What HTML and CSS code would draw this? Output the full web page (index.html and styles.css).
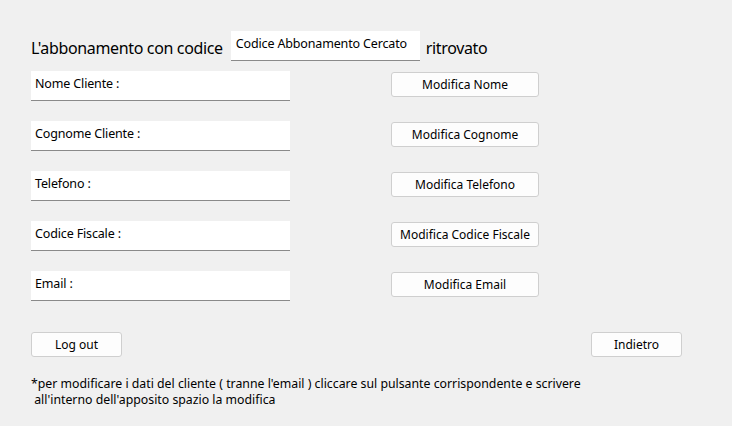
FILE: index.html
```html
<!DOCTYPE html>
<html lang="it">
<head>
<meta charset="utf-8">
<title>Abbonamento</title>
<link rel="stylesheet" href="styles.css">
</head>
<body>
<div class="page">
  <div class="title-row">
    <span class="title">L'abbonamento con codice</span>
    <div class="code-field">Codice Abbonamento Cercato</div>
    <span class="title">ritrovato</span>
  </div>
  <div class="rows">
    <div class="row"><div class="field">Nome Cliente :</div><button class="btn btn-mod">Modifica Nome</button></div>
    <div class="row"><div class="field">Cognome Cliente :</div><button class="btn btn-mod">Modifica Cognome</button></div>
    <div class="row"><div class="field">Telefono :</div><button class="btn btn-mod">Modifica Telefono</button></div>
    <div class="row"><div class="field">Codice Fiscale :</div><button class="btn btn-mod">Modifica Codice Fiscale</button></div>
    <div class="row"><div class="field">Email :</div><button class="btn btn-mod">Modifica Email</button></div>
  </div>
  <div class="actions">
    <button class="btn btn-small">Log out</button>
    <button class="btn btn-small">Indietro</button>
  </div>
  <p class="note">*per modificare i dati del cliente ( tranne l'email ) cliccare sul pulsante corrispondente e scrivere<br>&nbsp;all'interno dell'apposito spazio la modifica</p>
</div>
</body>
</html>
```
FILE: styles.css
```css
html, body {
  margin: 0;
  padding: 0;
  background: #f0f0f0;
}
body {
  font-family: "Noto Sans", "Open Sans", sans-serif;
  color: #000;
  width: 732px;
  height: 426px;
  overflow: hidden;
}
.page {
  padding: 31px 0 0 31px;
}
.title-row {
  display: flex;
  align-items: flex-start;
  height: 30px;
}
.title {
  font-size: 16px;
  line-height: 20px;
  letter-spacing: -0.35px;
  margin-top: 7px;
}
.code-field {
  box-sizing: border-box;
  width: 189px;
  height: 30px;
  margin: 0 6px 0 8px;
  background: #fff;
  border-bottom: 1px solid #8a8a8a;
  font-size: 12.5px;
  letter-spacing: -0.15px;
  line-height: 16px;
  padding: 5px 0 0 5px;
}
.rows {
  margin-top: 10px;
  display: flex;
  flex-direction: column;
  gap: 20px;
}
.row {
  display: flex;
  align-items: flex-start;
  height: 30px;
}
.field {
  box-sizing: border-box;
  width: 259px;
  height: 30px;
  background: #fff;
  border-bottom: 1px solid #8a8a8a;
  font-size: 12.5px;
  letter-spacing: -0.15px;
  line-height: 16px;
  padding: 5px 0 0 4px;
}
.btn {
  box-sizing: border-box;
  height: 25px;
  background: #fdfdfd;
  border: 1px solid #cfcfcf;
  border-radius: 3px;
  font-family: "Noto Sans", "Open Sans", sans-serif;
  font-size: 12px;
  color: #000;
  padding: 0;
  line-height: 22px;
}
.btn-mod {
  width: 148px;
  margin: 1px 0 0 101px;
}
.actions {
  margin-top: 31px;
  display: flex;
  justify-content: space-between;
  width: 651px;
}
.btn-small {
  width: 91px;
}
.note {
  margin: 19px 0 0 0;
  font-size: 12.3px;
  line-height: 16px;
}
```
